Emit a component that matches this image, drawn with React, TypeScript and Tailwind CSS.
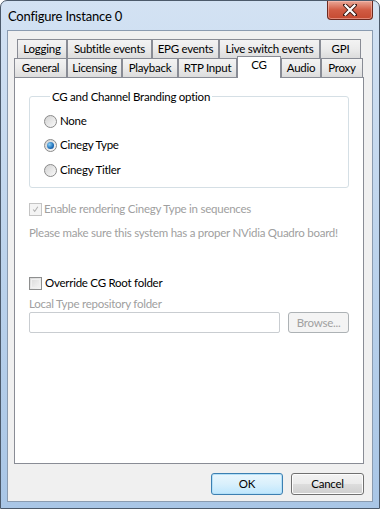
const FONT = "font-['Lato','Noto_Sans',sans-serif]";

const row1 = [
  { label: "Logging", w: "w-[50px]" },
  { label: "Subtitle events", w: "w-[85px]" },
  { label: "EPG events", w: "w-[67px]" },
  { label: "Live switch events", w: "w-[101px]" },
  { label: "GPI", w: "w-[41px]" },
];

const row2 = [
  { label: "General", w: "w-[53px]" },
  { label: "Licensing", w: "w-[55px]" },
  { label: "Playback", w: "w-[56px]" },
  { label: "RTP Input", w: "w-[59px]" },
  { label: "CG", w: "w-[44px]", active: true },
  { label: "Audio", w: "w-[40px]" },
  { label: "Proxy", w: "w-[42px]" },
];

const Tab = ({ label, w, active }: { label: string; w: string; active?: boolean }) =>
  active ? (
    <div
      className={`${w} relative z-10 -mb-[1px] h-[22px] shrink-0 whitespace-nowrap border border-b-0 border-[#898c95] bg-white text-center leading-[16px]`}
    >
      {label}
    </div>
  ) : (
    <div
      className={`${w} h-[19px] shrink-0 whitespace-nowrap border border-b-0 border-[#898c95] bg-gradient-to-b from-[#f3f3f3] via-[#ebebeb] to-[#dcdcdc] text-center leading-[18px]`}
    >
      {label}
    </div>
  );

const Radio = ({ checked }: { checked?: boolean }) => (
  <span className="flex h-[13px] w-[13px] shrink-0 items-center justify-center rounded-full border border-[#8a8a8a] bg-gradient-to-br from-[#d2d2d2] to-[#fbfbfb]">
    {checked && (
      <span className="h-[7px] w-[7px] rounded-full bg-[radial-gradient(circle_at_35%_35%,#8ad0f7,#1f6fb8_60%,#0d3f86)]" />
    )}
  </span>
);

const Check = ({ checked, disabled }: { checked?: boolean; disabled?: boolean }) => (
  <span
    className={`flex h-[13px] w-[13px] shrink-0 items-center justify-center border ${
      disabled ? "border-[#c4c4c4] bg-[#f4f4f4]" : "border-[#8e8f8f] bg-gradient-to-br from-[#d8d8d8] to-[#f8f8f8]"
    }`}
  >
    <span className={`h-[9px] w-[9px] border ${disabled ? "border-[#f4f4f4]" : "border-[#f0f0f0]"} flex items-center justify-center`}>
      {checked && (
        <svg width="9" height="9" viewBox="0 0 9 9">
          <path d="M1.5 4.5 L3.5 7 L7.5 1" fill="none" stroke={disabled ? "#b0b0b0" : "#333"} strokeWidth="1.4" />
        </svg>
      )}
    </span>
  </span>
);

export default function App() {
  return (
    <div
      className={`${FONT} flex h-[509px] w-[380px] flex-col rounded-t-[7px] border border-[#4c5a6b] bg-gradient-to-b from-[#d3e2f3] via-[#bcd3ec] to-[#a9c6e6] text-[11.5px] tracking-[-0.25px] text-black`}
    >
      {/* Title bar */}
      <div className="flex h-[29px] shrink-0 items-start justify-between">
        <div className="pl-[7px] pt-[6px] text-[13px] leading-[18px] tracking-[-0.2px] text-black">Configure Instance 0</div>
        <button className="mr-[6px] flex h-[19px] w-[46px] items-center justify-center rounded-b-[4px] border border-t-0 border-[#6d2a20] bg-gradient-to-b from-[#e9a797] via-[#d15b43] to-[#c54a31] shadow-[inset_0_0_0_1px_rgba(255,200,190,0.5)]">
          <svg width="14" height="12" viewBox="0 0 14 12">
            <path d="M2 1 L12 11 M12 1 L2 11" stroke="#3b1a15" strokeWidth="4" strokeLinecap="square" />
            <path d="M2.5 1.5 L11.5 10.5 M11.5 1.5 L2.5 10.5" stroke="#ffffff" strokeWidth="2.2" strokeLinecap="square" />
          </svg>
        </button>
      </div>

      {/* Client area */}
      <div className="mx-[6px] flex h-[472px] flex-col border border-[#8a9bb0] bg-[#f0f0f0]">
        <div className="ml-[6px] mt-[8px] flex flex-col">
          <div className="flex pl-[3px]">
            {row1.map((t) => (
              <Tab key={t.label} {...t} />
            ))}
          </div>
          <div className="flex h-[19px] items-end">
            {row2.map((t) => (
              <Tab key={t.label} {...t} />
            ))}
          </div>
          {/* Tab panel */}
          <div className="flex h-[387px] w-[350px] flex-col border border-[#898c95] bg-white px-[14px]">
            <fieldset className="mt-[11px] h-[99px] rounded-[3px] border border-[#d5dfe5] px-[14px]">
              <legend className="ml-[6px] px-[2px] leading-[15px]">CG and Channel Branding option</legend>
              <div className="mt-[10px] flex flex-col gap-[10px]">
                <label className="flex h-[14px] items-center gap-[3px]">
                  <Radio />
                  None
                </label>
                <label className="flex h-[14px] items-center gap-[3px]">
                  <Radio checked />
                  Cinegy Type
                </label>
                <label className="mt-[1px] flex h-[14px] items-center gap-[3px]">
                  <Radio />
                  Cinegy Titler
                </label>
              </div>
            </fieldset>

            <label className="mt-[14px] flex h-[14px] items-center gap-[2px] text-[#a0a0a0]">
              <Check checked disabled />
              Enable rendering Cinegy Type in sequences
            </label>
            <p className="mt-[10px] whitespace-nowrap leading-[14px] text-[#a0a0a0]">
              Please make sure this system has a proper NVidia Quadro board!
            </p>

            <label className="mt-[36px] flex h-[14px] items-center gap-[3px]">
              <Check />
              Override CG Root folder
            </label>
            <p className="mt-[7px] leading-[14px] text-[#a0a0a0]">Local Type repository folder</p>
            <div className="mt-[1px] flex gap-[8px]">
              <div className="h-[21px] w-[252px] rounded-[2px] border border-[#c9cdd1] bg-white" />
              <button className="h-[21px] w-[61px] rounded-[3px] border border-[#adb2b5] bg-[#f4f4f4] text-[#a0a0a0]">
                Browse...
              </button>
            </div>
          </div>
        </div>

        {/* Buttons */}
        <div className="mr-[8px] mt-[9px] flex justify-end gap-[8px]">
          <button className="h-[22px] w-[72px] rounded-[3px] border border-[#3c7fb1] bg-gradient-to-b from-[#eaf6fd] via-[#d9f0fc] to-[#bee6fd] shadow-[inset_0_0_0_1px_#b4e0f8]">
            OK
          </button>
          <button className="h-[22px] w-[73px] rounded-[3px] border border-[#707070] bg-[linear-gradient(to_bottom,#f2f2f2_0%,#ebebeb_50%,#dddddd_50%,#cfcfcf_100%)] shadow-[inset_0_0_0_1px_#fcfcfc]">
            Cancel
          </button>
        </div>
      </div>
    </div>
  );
}
